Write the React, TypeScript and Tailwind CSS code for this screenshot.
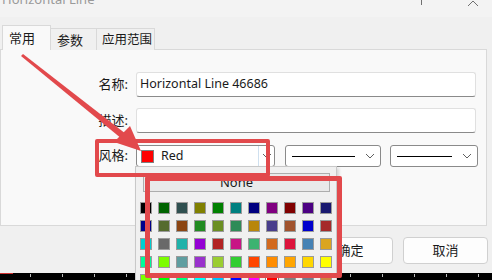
import React from 'react';

const palette = [
  ['#000000', '#006400', '#2f4f4f', '#808000', '#008000', '#008080', '#000080', '#800080', '#800000', '#4b0082', '#191970'],
  ['#00008b', '#556b2f', '#8b4513', '#228b22', '#6b8e23', '#2e8b57', '#b8860b', '#483d8b', '#a0522d', '#0000cd', '#a52a2a'],
  ['#00ced1', '#696969', '#20b2aa', '#9400d3', '#b22222', '#c71585', '#3cb371', '#d2691e', '#dc143c', '#4682b4', '#daa520'],
  ['#00fa9a', '#7cfc00', '#5f9ea0', '#9932cc', '#9acd32', '#32cd32', '#ff4500', '#ff8c00', '#ffa500', '#ffd700', '#ffff00'],
  ['#7fff00', '#00ff00', '#00ff7f', '#00ffff', '#00bfff', '#0000ff', '#ff00ff', '#ff0000', '#808080', '#708090', '#cd853f'],
];

function Chevron() {
  return (
    <svg width="10" height="6" viewBox="0 0 10 6" className="shrink-0">
      <path d="M1 1 L5 5 L9 1" fill="none" stroke="#606060" strokeWidth="1" />
    </svg>
  );
}

function LineCombo({ width, lineWidth }: { width: string; lineWidth: string }) {
  return (
    <div className={`${width} h-[22px] bg-white border border-[#8a8a8a] rounded-[3px] flex items-center pl-[6px] pr-[5px] gap-[10px]`}>
      <div className={`${lineWidth} h-[1px] bg-black`} />
      <Chevron />
    </div>
  );
}

export default function App() {
  return (
    <div
      className="relative w-[492px] h-[280px] overflow-hidden bg-[#f0f0f0] text-[13px] text-[#1a1a1a]"
      style={{ fontFamily: '"Noto Sans", "Noto Sans CJK SC", sans-serif' }}
    >
      {/* title bar */}
      <div className="h-[17px] bg-[#f3f3f3] flex justify-between overflow-hidden">
        <span className="pl-[2px] -mt-[10px] text-[13px] text-[#9a9a9a] whitespace-nowrap">Horizontal Line</span>
        <div className="flex items-start">
          <div className="w-[1px] h-[5px] bg-[#707070] mr-[45px] mt-0" />
          <svg width="12" height="6" viewBox="0 0 12 6" className="mr-[13px]">
            <path d="M1 6 L6 1 L11 6" fill="none" stroke="#707070" strokeWidth="1" />
          </svg>
        </div>
      </div>

      {/* tabs */}
      <div className="mt-[8px] flex items-end pl-[2px] h-[25px] relative z-10 whitespace-nowrap">
        <div className="w-[49px] h-[25px] bg-[#f9f9f9] border border-b-0 border-[#d9d9d9] pl-[6px] pt-[3px]">常用</div>
        <div className="w-[46px] h-[22px] border-t border-r border-[#d9d9d9] pl-[6px] pt-[2px] bg-[#f0f0f0]">参数</div>
        <div className="w-[58px] h-[22px] border-t border-r border-[#d9d9d9] pl-[5px] pt-[2px] bg-[#f0f0f0] text-[12.5px]">应用范围</div>
      </div>

      {/* panel */}
      <div className="-mt-[1px] w-[487px] h-[177px] bg-[#f9f9f9] border border-[#d9d9d9] pt-[22px]">
        <div className="flex items-center h-[25px]">
          <div className="w-[128px] text-right pr-[1px]">名称:</div>
          <div className="ml-[7px] w-[340px] h-[25px] bg-white border border-[#e0e0e0] border-b-[#8a8a8a] rounded-[3px] flex items-center pl-[3px] text-[12.5px] whitespace-nowrap">
            Horizontal Line 46686
          </div>
        </div>
        <div className="flex items-center h-[25px] mt-[11px]">
          <div className="w-[128px] text-right pr-[1px]">描述:</div>
          <div className="ml-[7px] w-[340px] h-[25px] bg-white border border-[#e0e0e0] border-b-[#8a8a8a] rounded-[3px]" />
        </div>
        <div className="flex items-center h-[22px] mt-[12px]">
          <div className="w-[128px] text-right pr-[1px]">风格:</div>
          <div className="ml-[7px] w-[139px] h-[22px] bg-white border border-[#8a8a8a] rounded-[3px] flex items-center">
            <div className="ml-[4px] w-[13px] h-[13px] bg-[#ff0000] border border-[#808080]" />
            <span className="ml-[7px] text-[12.5px] flex-1">Red</span>
            <div className="w-[1px] h-[20px] bg-[#cfe0ef]" />
            <div className="w-[15px] flex justify-center">
              <Chevron />
            </div>
          </div>
          <div className="ml-[10px]">
            <LineCombo width="w-[96px]" lineWidth="w-[64px]" />
          </div>
          <div className="ml-[9px]">
            <LineCombo width="w-[88px]" lineWidth="w-[57px]" />
          </div>
        </div>
      </div>

      {/* buttons */}
      <div className="mt-[11px] flex justify-end pr-[4px] gap-[10px]">
        <button className="w-[85px] h-[27px] bg-[#fdfdfd] border border-[#d0d0d0] rounded-[4px] text-[13px]">确定</button>
        <button className="w-[85px] h-[27px] bg-[#fdfdfd] border border-[#d0d0d0] rounded-[4px] text-[13px]">取消</button>
      </div>

      {/* chart strip at bottom */}
      <div className="absolute left-0 right-0 top-[273px] h-[7px] bg-black">
        <div className="absolute left-0 top-0 w-[13px] h-[1px] bg-[#d03030]" />
        {Array.from({ length: 15 }).map((_, i) => (
          <div key={i} className="absolute top-[1px] w-[1px] h-[3px] bg-[#bdbdbd]" style={{ left: 30 + i * 32 }} />
        ))}
      </div>

      {/* colour popup */}
      <div className="absolute left-[135px] top-[166px] w-[202px] h-[130px] bg-[#f0f0f0] border border-[#c8c8c8] shadow-[2px_2px_3px_rgba(0,0,0,0.15)]">
        <div className="mt-[6px] ml-[7px] w-[187px] h-[19px] bg-[#e9e9e9] border border-[#adadad] flex items-center justify-center text-[13px] leading-none">
          None
        </div>
        <div className="mt-[10px] ml-[4px] flex flex-col gap-[6px]">
          {palette.map((row, r) => (
            <div key={r} className="flex gap-[6px]">
              {row.map((c, i) => (
                <div
                  key={i}
                  className={`w-[12px] h-[12px] border ${r === 4 && i === 7 ? 'border-white outline outline-1 outline-[#808080]' : 'border-[#9a9a9a]'}`}
                  style={{ backgroundColor: c }}
                />
              ))}
            </div>
          ))}
        </div>
      </div>

      {/* red annotations */}
      <div className="absolute left-[95px] top-[139px] w-[175px] h-[38px] border-[4px] border-[#e2494c] rounded-[2px]" />
      <div className="absolute left-[145px] top-[176px] w-[197px] h-[102px] border-[5px] border-[#e2494c] rounded-[2px]" />
      <svg className="absolute left-0 top-0" width="492" height="280" viewBox="0 0 492 280">
        <polygon points="21,56 23,54 126,134 122,139" fill="#e2494c" />
        <polygon points="141,151 114,142 130,126" fill="#e2494c" />
      </svg>
    </div>
  );
}
